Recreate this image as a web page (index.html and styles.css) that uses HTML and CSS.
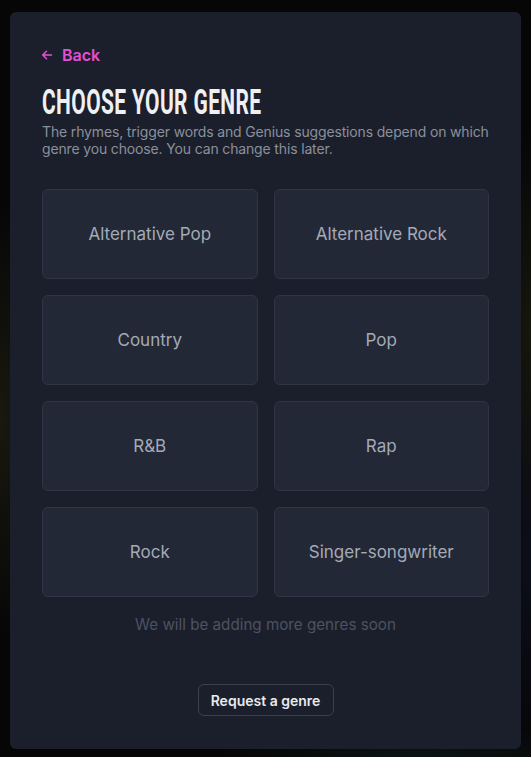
FILE: index.html
```html
<!DOCTYPE html>
<html>
<head>
<meta charset="utf-8">
<link rel="stylesheet" href="styles.css">
</head>
<body>
<div class="backdrop">
  <div class="card">
    <a class="back" href="#">
      <svg class="back-icon" viewBox="0 0 12 12" width="12" height="12" aria-hidden="true">
        <path d="M10.5 6H1.8M5.5 2.2L1.7 6l3.8 3.8" fill="none" stroke="currentColor" stroke-width="1.5" stroke-linecap="round" stroke-linejoin="round"/>
      </svg>
      <span>Back</span>
    </a>
    <h1 class="title"><span class="title-text">CHOOSE YOUR GENRE</span></h1>
    <p class="subtitle">The rhymes, trigger words and Genius suggestions depend on which genre you choose. You can change this later.</p>
    <div class="grid">
      <button class="tile">Alternative Pop</button>
      <button class="tile">Alternative Rock</button>
      <button class="tile">Country</button>
      <button class="tile">Pop</button>
      <button class="tile">R&amp;B</button>
      <button class="tile">Rap</button>
      <button class="tile">Rock</button>
      <button class="tile">Singer-songwriter</button>
    </div>
    <p class="note">We will be adding more genres soon</p>
    <div class="actions">
      <button class="request">Request a genre</button>
    </div>
  </div>
</div>
</body>
</html>
```
FILE: styles.css
```css
html, body {
  margin: 0;
  padding: 0;
  height: 100%;
}
body {
  font-family: Inter, "Noto Sans", sans-serif;
  background: #050506;
}
.backdrop {
  min-height: 757px;
  box-sizing: border-box;
  padding: 12px 10px 8px 10px;
  background:
    radial-gradient(ellipse 60px 220px at 0px 420px, rgba(60,60,30,0.35), transparent),
    radial-gradient(ellipse 40px 200px at 531px 330px, rgba(55,55,25,0.35), transparent),
    radial-gradient(ellipse 40px 200px at 531px 560px, rgba(20,25,50,0.45), transparent),
    radial-gradient(ellipse 200px 30px at 420px 757px, rgba(20,50,50,0.3), transparent),
    #060607;
}
.card {
  width: 511px;
  height: 737px;
  box-sizing: border-box;
  background: #1b1f2b;
  border-radius: 6px;
  padding: 36px 32px 0 32px;
  display: flex;
  flex-direction: column;
}
.back {
  display: flex;
  align-items: center;
  gap: 9px;
  color: #e550d1;
  text-decoration: none;
  font-weight: 600;
  font-size: 16px;
  line-height: 14px;
  height: 14px;
  margin-left: -1px;
}
.back-icon {
  display: block;
}
.title {
  margin: 23px 0 0 0;
  font-family: Roboto, "Liberation Sans", sans-serif;
  font-weight: 700;
  font-size: 35px;
  line-height: 36px;
  height: 36px;
  color: #eef0f4;
  letter-spacing: 0.6px;
  white-space: nowrap;
}
.title-text {
  display: inline-block;
  transform-origin: left center;
  transform: scaleX(0.6);
}
.subtitle {
  margin: 2px 0 0 0;
  font-size: 14px;
  line-height: 17px;
  letter-spacing: -0.15px;
  color: #8a909d;
}
.grid {
  margin-top: 32px;
  display: grid;
  grid-template-columns: 1fr 1fr;
  gap: 16px;
}
.tile {
  height: 90px;
  box-sizing: border-box;
  background: #232836;
  border: 1px solid #2f3545;
  border-radius: 6px;
  color: #a4aab6;
  font-family: Inter, "Noto Sans", sans-serif;
  font-size: 17px;
  padding: 0;
}
.note {
  margin: 18px 0 0 0;
  text-align: center;
  font-size: 15.2px;
  line-height: 20px;
  color: #4c5263;
}
.actions {
  margin-top: 49px;
  display: flex;
  justify-content: center;
}
.request {
  width: 136px;
  height: 32px;
  box-sizing: border-box;
  background: transparent;
  border: 1px solid #3a404d;
  border-radius: 6px;
  color: #e8eaee;
  font-family: Inter, "Noto Sans", sans-serif;
  font-weight: 600;
  font-size: 14px;
  padding: 0;
}
```
